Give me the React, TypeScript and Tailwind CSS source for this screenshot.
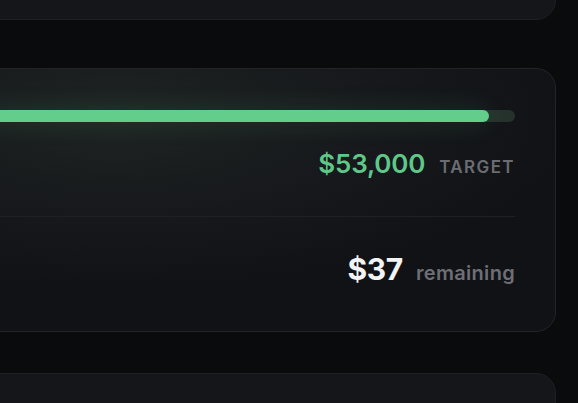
export default function App() {
  return (
    <div
      className="h-[403px] w-[578px] overflow-hidden bg-[#0a0b0d]"
      style={{ fontFamily: "Inter, 'Noto Sans', sans-serif" }}
    >
      <div className="-ml-[120px] flex w-[676px] flex-col">
        <div className="-mt-[40px] h-[60px] rounded-[20px] border border-[#1f2024] bg-[#15161a]" />

        <div className="mt-[48px] h-[264px] overflow-hidden rounded-[20px] border border-[#222428] bg-[radial-gradient(ellipse_460px_170px_at_35%_18%,#1e2422_0%,#17191c_55%,#111216_100%)] pl-[40px] pr-[40px] pt-[41px]">
          <div className="h-[12px] w-full rounded-full bg-[#25322c]">
            <div className="h-full w-[95.6%] rounded-full bg-[#63cd8b] shadow-[0_0_24px_rgba(90,210,140,0.18)]" />
          </div>
          <div className="mt-[29px] flex items-baseline justify-end gap-[14px] leading-none">
            <span className="text-[26px] font-semibold leading-none tracking-[-0.2px] text-[#5ec88a]">
              $53,000
            </span>
            <span className="text-[17px] font-semibold leading-none tracking-[1.4px] text-[#6b6d72]">
              TARGET
            </span>
          </div>
          <div className="mt-[39px] h-px w-full bg-[#1e2025]" />
          <div className="mt-[37px] flex items-baseline justify-end gap-[13px] leading-none">
            <span className="text-[30px] font-bold leading-none tracking-[-0.3px] text-[#f2f3f5]">
              $37
            </span>
            <span className="text-[20px] font-semibold leading-none tracking-[0.3px] text-[#6d6f75]">
              remaining
            </span>
          </div>
        </div>

        <div className="mt-[41px] h-[80px] rounded-[20px] border border-[#1f2024] bg-[#15161a]" />
      </div>
    </div>
  );
}
